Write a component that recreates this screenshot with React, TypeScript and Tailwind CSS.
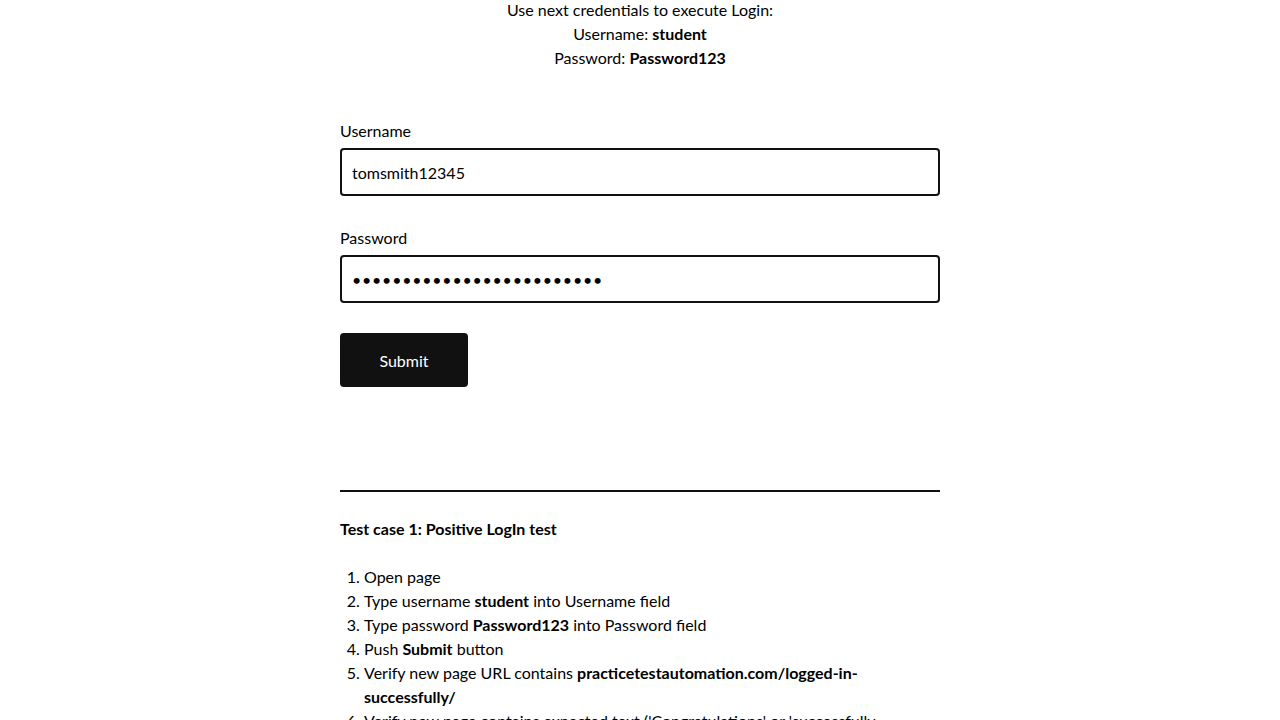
import React from "react";

export default function App() {
  const font = { fontFamily: "Lato, 'Open Sans', sans-serif" };
  return (
    <div className="min-h-[720px] bg-white text-[16px] leading-[24px] text-[#000]" style={font}>
      <div className="mx-auto w-[600px] -mt-[2px]">
        <div className="text-center">
          <div>Use next credentials to execute Login:</div>
          <div>
            Username: <b className="font-bold">student</b>
          </div>
          <div>
            Password: <b className="font-bold">Password123</b>
          </div>
        </div>

        <div className="mt-[49px]">
          <label className="block">Username</label>
          <input
            type="text"
            defaultValue="tomsmith12345"
            className="mt-[5px] block h-[48px] w-full rounded-[4px] border-2 border-[#111] px-[10px] text-[16px] text-black outline-none"
            style={font}
          />
        </div>

        <div className="mt-[30px]">
          <label className="block">Password</label>
          <input
            type="password"
            defaultValue="aaaaaaaaaaaaaaaaaaaaaaaaa"
            className="mt-[5px] block h-[48px] w-full rounded-[4px] border-2 border-[#111] px-[10px] text-[16px] tracking-[0.76px] text-black outline-none"
            style={font}
          />
        </div>

        <button
          className="mt-[30px] flex h-[54px] w-[128px] items-center justify-center rounded-[4px] bg-[#111] pt-[1px] text-[16px] text-white"
          style={font}
        >
          Submit
        </button>

        <div className="mt-[103px] h-[2px] w-full bg-[#111]" />

        <div className="mt-[25px] font-bold">Test case 1: Positive LogIn test</div>

        <ol className="mt-[24px] list-decimal pl-[24px]">
          <li>Open page</li>
          <li>
            Type username <b>student</b> into Username field
          </li>
          <li>
            Type password <b>Password123</b> into Password field
          </li>
          <li>
            Push <b>Submit</b> button
          </li>
          <li className="pr-[70px]">
            Verify new page URL contains <b>practicetestautomation.com/logged-in-successfully/</b>
          </li>
          <li className="pr-[60px]">
            Verify new page contains expected text ('Congratulations' or 'successfully logged in')
          </li>
          <li>
            Verify button <b>Log out</b> is displayed on the new page
          </li>
        </ol>
        <div className="h-[40px]" />
      </div>
    </div>
  );
}
